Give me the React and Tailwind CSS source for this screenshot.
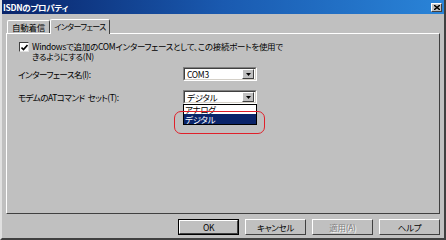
import React from "react";

const jp = "[font-family:'Noto_Sans_CJK_JP','Noto_Sans',sans-serif] [font-feature-settings:'palt'] tracking-[-0.3px]";

function Combo({ value }) {
  return (
    <div className="w-[74px] h-[14px] bg-white border-t border-l border-t-[#808080] border-l-[#808080] border-b border-r border-b-white border-r-white">
      <div className="w-full h-full border-t border-l border-t-[#404040] border-l-[#404040] border-b border-r border-b-[#d4d0c8] border-r-[#d4d0c8] flex items-center">
        <span className="flex-1 pl-[2px] text-[8.5px] leading-none text-black">{value}</span>
        <div className="w-[12px] h-[10px] mr-[1px] bg-[#c0c0c0] border-t border-l border-t-white border-l-white border-b border-r border-b-[#404040] border-r-[#404040] flex items-center justify-center">
          <svg width="5" height="3" viewBox="0 0 5 3"><path d="M0 0h5L2.5 3z" fill="#000" /></svg>
        </div>
      </div>
    </div>
  );
}

function Btn({ children, def, disabled }) {
  return (
    <div className={`w-[61px] h-[16px] ${def ? "border border-black" : ""}`}>
      <div className="w-full h-full bg-[#c0c0c0] border-t border-l border-t-white border-l-white border-b border-r border-b-[#404040] border-r-[#404040] flex items-center justify-center">
        <span className={`text-[8.5px] leading-none ${disabled ? "text-[#808080] [text-shadow:1px_1px_0_#fff]" : "text-black"}`}>{children}</span>
      </div>
    </div>
  );
}

export default function App() {
  return (
    <div className={`${jp} w-[446px] h-[240px] bg-[#c0c0c0] overflow-hidden`}>
      <div className="w-[446px] h-[240px] border-r-2 border-b-2 border-r-[#404040] border-b-[#404040] border-l-2 border-l-[#e0e0e0] flex flex-col relative">
        <div className="h-[14px] bg-gradient-to-r from-[#0a246a] via-[#1a5ab0] to-[#2a84d8] flex items-center justify-between pl-[1px] pr-[2px]">
          <span className="text-white text-[8.5px] font-bold leading-none">ISDNのプロパティ</span>
          <div className="w-[11px] h-[9px] bg-[#c0c0c0] border-t border-l border-t-white border-l-white border-b border-r border-b-[#404040] border-r-[#404040] flex items-center justify-center">
            <svg width="6" height="5" viewBox="0 0 6 5"><path d="M0 0l6 5M6 0L0 5" stroke="#000" strokeWidth="1.4" /></svg>
          </div>
        </div>

        <div className="flex items-end pl-[5px] mt-[4px] h-[15px]">
          <div className="h-[13px] w-[43px] border-t border-l border-t-white border-l-white border-r border-r-[#404040] rounded-t-[2px] flex items-center justify-center">
            <span className="text-[8.5px] leading-none text-black">自動着信</span>
          </div>
          <div className="h-[15px] w-[60px] -mb-[1px] bg-[#c0c0c0] relative z-10 border-t border-l border-t-white border-l-white border-r border-r-[#404040] rounded-t-[2px] flex items-center justify-center">
            <span className="text-[8px] leading-none text-black whitespace-nowrap tracking-[-0.6px]">インターフェース</span>
          </div>
        </div>

        <div className="ml-[4px] mr-[4px] h-[181px] border-t border-l border-t-white border-l-white border-r border-b border-r-[#404040] border-b-[#404040] relative">
          <div className="pt-[7px] pl-[12px] flex items-start gap-[3px]">
            <div className="w-[10px] h-[10px] mt-[1px] bg-white border border-t-[#404040] border-l-[#404040] border-b-[#e0e0e0] border-r-[#e0e0e0] flex items-center justify-center">
              <svg width="7" height="7" viewBox="0 0 7 7"><path d="M0.5 3.5l2 2l4-4.5" stroke="#000" strokeWidth="1.6" fill="none" /></svg>
            </div>
            <div className="text-[8.5px] text-black">
              <div className="h-[10px] leading-[10px] whitespace-nowrap">Windowsで追加のCOMインターフェースとして、この接続ポートを使用で</div>
              <div className="h-[10px] leading-[10px]">きるようにする(N)</div>
            </div>
          </div>

          <div className="flex items-center pl-[11px] mt-[6px]">
            <span className="w-[165px] text-[8.5px] leading-none text-black tracking-[-0.5px]">インターフェース名(I):</span>
            <Combo value="COM3" />
          </div>

          <div className="flex items-start pl-[11px] mt-[9px]">
            <span className="w-[165px] text-[8.5px] leading-none text-black mt-[3px] tracking-[-0.5px] whitespace-pre">モデムのATコマンド  セット(T):</span>
            <div className="flex flex-col">
              <Combo value="デジタル" />
              <div className="w-[74px] bg-white border border-black flex flex-col">
                <div className="h-[9px] pl-[1px] text-[8.5px] leading-[9px] text-black">アナログ</div>
                <div className="h-[10px] pl-[1px] bg-[#0a246a] text-[8.5px] leading-[10px] text-white">デジタル</div>
              </div>
            </div>
          </div>

          <div className="absolute left-[167px] top-[77px] w-[91px] h-[23px] border-[1.5px] border-[#e0202a] rounded-[7px]" />
        </div>

        <div className="flex justify-end gap-[6px] pr-[4px] mt-[5px]">
          <Btn def>OK</Btn>
          <Btn>キャンセル</Btn>
          <Btn disabled>適用(A)</Btn>
          <Btn>ヘルプ</Btn>
        </div>
      </div>
    </div>
  );
}
